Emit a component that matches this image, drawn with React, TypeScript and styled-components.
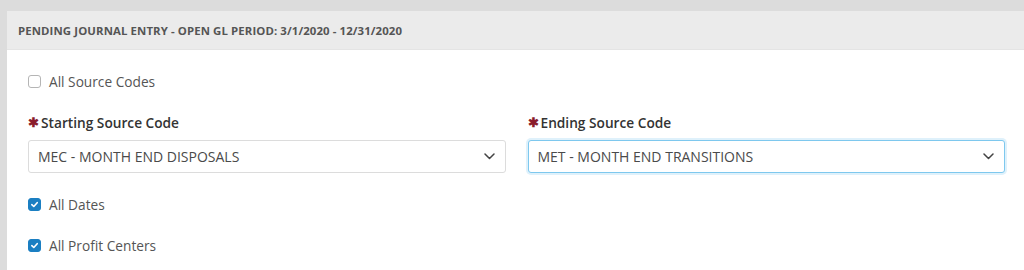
import styled, { createGlobalStyle } from "styled-components";

// ---------- Global Styles ----------
const GlobalStyle = createGlobalStyle`
  * { box-sizing: border-box; }
  body {
    margin: 0;
    background: #dcdcdc;
    font-family: "Open Sans", "Noto Sans", Arial, sans-serif;
    color: #444;
  }
`;

// ---------- styled-components ----------
const S = {
  Page: styled.div`
    padding: 11px 0 0 7px;
    height: 270px;
    overflow: hidden;
  `,
  Panel: styled.section`
    background: #fff;
    min-height: 300px;
  `,
  Header: styled.header`
    height: 39px;
    display: flex;
    align-items: center;
    padding-left: 11px;
    background: #ebebeb;
    border-bottom: 1px solid #e4e4e4;
  `,
  Title: styled.h2`
    margin: 0;
    font-size: 11.4px;
    font-weight: 700;
    color: #555;
    letter-spacing: 0.1px;
    text-transform: uppercase;
  `,
  Body: styled.div`
    padding: 21px 19px 0 21px;
    display: grid;
  `,
  CheckRow: styled.label<{ $top: number }>`
    display: flex;
    align-items: center;
    gap: 8px;
    height: 20px;
    margin-top: ${(p) => p.$top}px;
    font-size: 13.7px;
    color: #555;
  `,
  Box: styled.span<{ $on?: boolean }>`
    width: 13px;
    height: 13px;
    border-radius: 3px;
    display: grid;
    place-items: center;
    border: 1px solid ${(p) => (p.$on ? "#1b7fc2" : "#b5b5b5")};
    background: ${(p) => (p.$on ? "#1b7fc2" : "#fff")};
  `,
  Fields: styled.div`
    margin-top: 21px;
    display: grid;
    grid-template-columns: 1fr 1fr;
    column-gap: 22px;
  `,
  Field: styled.div`
    display: grid;
    gap: 8px;
  `,
  Label: styled.div`
    display: flex;
    align-items: center;
    gap: 5px;
    height: 20px;
    font-size: 13.7px;
    font-weight: 600;
    color: #333;
  `,
  Star: styled.span`
    color: #8a1c2c;
    font-size: 13px;
    font-weight: 700;
    line-height: 1;
    width: 8px;
  `,
  Select: styled.div<{ $focus?: boolean }>`
    height: 33px;
    display: flex;
    align-items: center;
    justify-content: space-between;
    padding: 0 10px 0 9px;
    border-radius: 3px;
    font-size: 14px;
    color: #4a4a4a;
    text-transform: uppercase;
    background: #fff;
    border: 1px solid ${(p) => (p.$focus ? "#7ec8ee" : "#dcdcdc")};
    box-shadow: ${(p) => (p.$focus ? "0 0 0 2px rgba(126, 200, 238, 0.25)" : "none")};
  `,
};

function Check() {
  return (
    <svg width="9" height="9" viewBox="0 0 10 10">
      <path d="M2 5.2 L4.2 7.2 L8 3" fill="none" stroke="#fff" strokeWidth="1.8" strokeLinecap="round" strokeLinejoin="round" />
    </svg>
  );
}

function Chevron() {
  return (
    <svg width="11" height="7" viewBox="0 0 11 7">
      <path d="M1 1 L5.5 5.5 L10 1" fill="none" stroke="#444" strokeWidth="1.5" strokeLinecap="round" strokeLinejoin="round" />
    </svg>
  );
}

// ---------- component ----------
export default function App() {
  return (
    <>
      <GlobalStyle />
      <S.Page>
        <S.Panel>
          <S.Header>
            <S.Title>Pending Journal Entry - Open GL Period: 3/1/2020 - 12/31/2020</S.Title>
          </S.Header>
          <S.Body>
            <S.CheckRow $top={0}>
              <S.Box />
              All Source Codes
            </S.CheckRow>

            <S.Fields>
              <S.Field>
                <S.Label>
                  <S.Star>✱</S.Star>Starting Source Code
                </S.Label>
                <S.Select>
                  MEC - Month End Disposals
                  <Chevron />
                </S.Select>
              </S.Field>
              <S.Field>
                <S.Label>
                  <S.Star>✱</S.Star>Ending Source Code
                </S.Label>
                <S.Select $focus>
                  MET - Month End Transitions
                  <Chevron />
                </S.Select>
              </S.Field>
            </S.Fields>

            <S.CheckRow $top={21}>
              <S.Box $on>
                <Check />
              </S.Box>
              All Dates
            </S.CheckRow>
            <S.CheckRow $top={21}>
              <S.Box $on>
                <Check />
              </S.Box>
              All Profit Centers
            </S.CheckRow>
          </S.Body>
        </S.Panel>
      </S.Page>
    </>
  );
}
